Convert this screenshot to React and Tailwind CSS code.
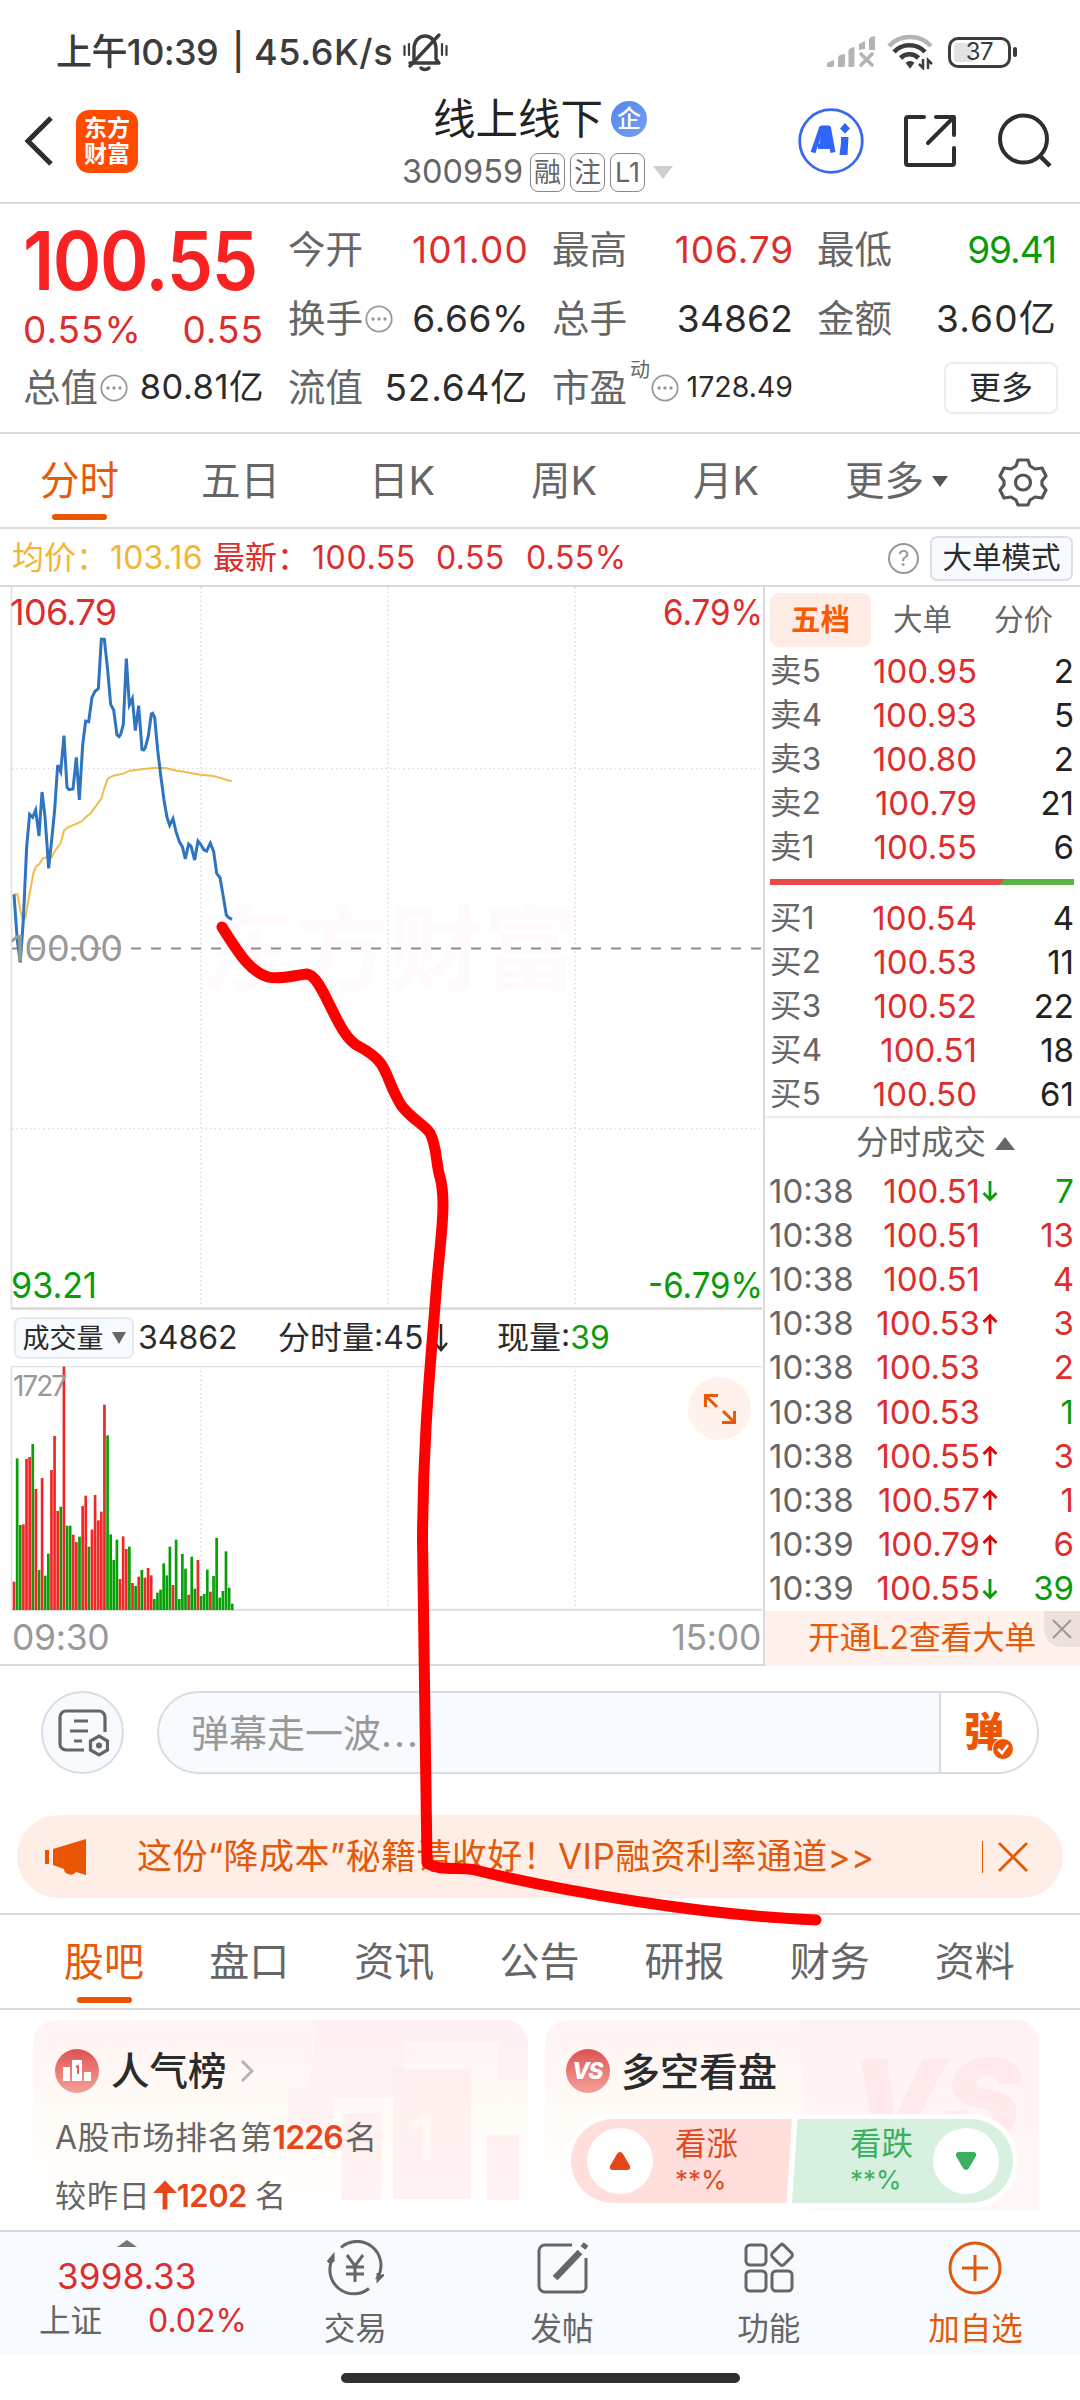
import React from "react";

const TICKS = [
  [1025, 1], [655, 0], [855, 0], [853, 1], [657, 1], [651, 1], [612, 0], [747, 1], [990, 0], [714, 1],
  [1007, 0], [941, 0], [690, 1], [588, 1], [813, 1], [800, 0], [380, 1], [857, 0], [857, 0], [884, 1],
  [906, 1], [890, 0], [798, 1], [767, 1], [920, 0], [869, 1], [765, 1], [841, 1], [815, 1], [494, 1],
  [586, 0], [883, 0], [960, 0], [899, 0], [1017, 1], [889, 1], [927, 1], [920, 0], [1029, 1], [1038, 0],
  [1010, 1], [990, 0], [1013, 1], [984, 1], [1006, 1], [1077, 0], [1058, 0], [1049, 0], [970, 0], [1006, 0],
  [920, 0], [1035, 1], [899, 0], [1077, 0], [942, 0], [986, 0], [1064, 1], [950, 0], [1046, 0], [960, 1],
  [1068, 0], [1062, 0], [989, 0], [1055, 1], [1008, 0], [894, 0], [1073, 0], [1053, 0], [934, 0], [1043, 0],
  [1091, 0],
];

const PRICE =
  "42,943 52,1082 61,1147 70,1020 80,800 89,703 98,712 107,690 117,768 126,636 135,710 146,865 155,780 164,690 173,555 182,575 192,467 201,622 207,629 219,627 229,532 238,660 248,495 257,423 266,425 276,352 285,334 295,326 304,178 313,178 323,270 332,373 341,390 351,465 357,470 362,463 370,433 379,236 388,375 397,356 406,452 416,377 426,508 431,510 436,503 445,468 454,402 458,400 464,412 473,510 482,585 492,660 501,712 509,736 519,716 528,755 538,785 547,800 556,837 566,792 573,798 584,840 594,783 602,793 612,810 620,813 631,789 641,815 650,880 660,893 669,945 679,1005 685,1012 696,1018";
const AVG =
  "42,943 52,943 61,990 68,1020 76,1015 88,945 100,880 108,860 118,852 128,836 138,832 155,832 165,812 182,790 192,752 205,741 225,733 247,723 258,711 272,700 285,682 304,656 313,625 323,597 335,589 350,585 370,581 390,572 430,567 470,563 500,565 530,572 560,577 600,584 640,588 665,595 680,600 696,603";

const ASKS = [["卖5", "100.95", "2"], ["卖4", "100.93", "5"], ["卖3", "100.80", "2"], ["卖2", "100.79", "21"], ["卖1", "100.55", "6"]];
const BIDS = [["买1", "100.54", "4"], ["买2", "100.53", "11"], ["买3", "100.52", "22"], ["买4", "100.51", "18"], ["买5", "100.50", "61"]];
const TRADES = [
  ["10:38", "100.51", "d", "7", 0], ["10:38", "100.51", "", "13", 1], ["10:38", "100.51", "", "4", 1],
  ["10:38", "100.53", "u", "3", 1], ["10:38", "100.53", "", "2", 1], ["10:38", "100.53", "", "1", 0],
  ["10:38", "100.55", "u", "3", 1], ["10:38", "100.57", "u", "1", 1], ["10:39", "100.79", "u", "6", 1],
  ["10:39", "100.55", "d", "39", 0],
];

const Dots = ({ className }) => (
  <svg className={className} width="28" height="28" viewBox="0 0 28 28">
    <circle cx="14" cy="14" r="12.7" fill="none" stroke="#999" strokeWidth="1.8" />
    <circle cx="8" cy="14" r="1.7" fill="#999" />
    <circle cx="14" cy="14" r="1.7" fill="#999" />
    <circle cx="20" cy="14" r="1.7" fill="#999" />
  </svg>
);

const Arrow = ({ dir }) => (
  <svg width="16" height="22" viewBox="0 0 16 22" fill="none" strokeWidth="2.8" stroke={dir === "u" ? "#e60000" : "#0a9b0a"}>
    {dir === "u" && <path d="M8 21V3M1.5 9 8 2.5 14.500 9" />}
    {dir === "d" && <path d="M8 1v18M1.500 13 8 19.500 14.500 13" />}
  </svg>
);

function StatusBar() {
  return (
    <div className="flex h-[84px] items-center pt-5 pl-[56px] text-[#3c3c3c]">
      <div className="flex w-[346px] items-center text-[36px] font-medium whitespace-nowrap">
        <span className="w-[176px] tracking-[-0.6px]">上午10:39</span>
        <span className="w-[22px]">|</span>
        <span className="tracking-[0.6px]">45.6K/s</span>
      </div>
      <svg width="46" height="40" viewBox="0 0 46 40" fill="none" stroke="#3c3c3c" strokeWidth="3.4" strokeLinecap="round">
        <path d="M8 31h29M12 31V17c0-8 5-13 11-13s11 5 11 13v10l3 4" strokeLinejoin="round" />
        <path d="M19 36c2 2 6 2 8 0M37 3 8 34" />
        <path d="M2.500 14v9M7 12v11M40 12v11M44.500 14v9" strokeWidth="2.2" />
      </svg>
      <svg className="ml-[378px]" width="50" height="34" viewBox="0 0 50 34" fill="#b5b3b6">
        <path d="M1 32v-3q0-2 2-2l5-2v5q0 2-2 2zM12 32V22l2-2 5-1v11q0 2-2 2zM22.500 32V15l2-2 4-1v18q0 2-2 2zM33 15V9l6-3v8zM43 15V4l2-2 4-1v14z" />
        <path d="m35 19 11 11M46 19 35 30" stroke="#b5b3b6" strokeWidth="3.6" strokeLinecap="round" />
      </svg>
      <svg className="ml-[11px]" width="46" height="36" viewBox="0 0 46 36" fill="none" strokeWidth="4.6">
        <path d="M2 12C13 0 33 0 44 12" stroke="#b5b3b6" />
        <path d="M7 18c8-9 23-9 31 0M13.500 24c5-5 13-5 18 0" stroke="#3c3c3c" />
        <path d="M20 29q3-2 6 0l-3 4z" fill="#3c3c3c" stroke="#3c3c3c" strokeWidth="2" />
        <path d="M36 25v9l-4-4M41 35v-9l4 4" stroke="#3c3c3c" strokeWidth="2.500" />
      </svg>
      <div className="ml-[15px] flex h-[31px] w-[63px] items-center justify-center rounded-[10px] border-[3px] border-[#3c3c3c] p-[3px]">
        <div className="flex h-full w-full items-center justify-center rounded-[4px] bg-linear-to-r from-[#e3e3e3] from-37% to-white to-37% text-[24px] leading-none tracking-[-0.500px]">37</div>
      </div>
      <div className="ml-[2px] h-[10px] w-[4px] rounded-[2px] bg-[#3c3c3c]" />
    </div>
  );
}

function Header() {
  const chip = "flex h-[39px] w-[35px] items-center justify-center rounded-[8px] border-[1.5px] border-[#888] text-[27px] leading-none text-[#666]";
  return (
    <div className="flex h-[120px] border-b-2 border-[#dadada]">
      <div className="flex w-[402px] items-center pb-1">
        <svg className="ml-[24px]" width="30" height="50" viewBox="0 0 30 50" fill="none" stroke="#2e2e2e" strokeWidth="5">
          <path d="M27 2 4 25l23 23" />
        </svg>
        <div className="ml-[22px] grid h-[63px] w-[62px] place-content-center rounded-[13px] bg-[#ff4a00] text-center text-[23px] leading-[26px] font-bold text-white">
          <div>东方</div>
          <div>财富</div>
        </div>
      </div>
      <div className="w-[366px] pt-[13px]">
        <div className="flex h-[44px] items-center pl-[31px]">
          <span className="text-[42.500px] leading-none whitespace-nowrap text-[#222]">线上线下</span>
          <div className="ml-[8px] grid size-[36px] place-content-center rounded-full bg-linear-to-br from-[#5486ea] to-[#74a0f4] text-[24px] leading-none font-medium text-white">企</div>
        </div>
        <div className="mt-[12px] flex h-[39px] items-center text-[#666]">
          <span className="w-[128px] text-[32.500px] leading-none">300959</span>
          <div className="flex gap-[5px]">
            <div className={chip}>融</div>
            <div className={chip}>注</div>
            <div className={chip}>L1</div>
          </div>
          <div className="ml-[8px] border-x-[10px] border-t-[13px] border-x-transparent border-t-[#cfcfcf]" />
        </div>
      </div>
      <div className="flex items-center pb-1 pl-[30px]">
        <svg width="66" height="66" viewBox="0 0 66 66" fill="#2f66f6">
          <circle cx="33" cy="33" r="31.300" strokeWidth="2.800" fill="none" stroke="#3a68ec" />
          <path d="M15 44.500 23.500 20h7L35 44.500M20 38.500h12" strokeWidth="5" stroke="#2f66f6" strokeLinejoin="round" fill="none" />
          <path d="M24 22h6l3 16H21zM43 29h7.500l-1 18H41.500l1.500-12z" />
          <path d="m47 15 5 5.500-5 5-5-5z" />
        </svg>
        <svg className="ml-[39px]" width="54" height="54" viewBox="0 0 54 54" fill="none" stroke="#2e2e2e" strokeWidth="4" strokeLinecap="round" strokeLinejoin="round">
          <path d="M21 3H5a2 2 0 0 0-2 2v44a2 2 0 0 0 2 2h44a2 2 0 0 0 2-2V34M33 3h18v18M50 4 25 29" />
        </svg>
        <svg className="ml-[40px]" width="56" height="56" viewBox="0 0 56 56" fill="none" stroke="#2e2e2e" strokeWidth="4">
          <circle cx="26.500" cy="26" r="23.500" />
          <path d="m42 42 11 11" strokeWidth="4.500" />
        </svg>
      </div>
    </div>
  );
}

function Quote() {
  const label = "text-[37.500px] text-[#666]";
  return (
    <div className="grid h-[230px] grid-cols-[265px_264px_265px_264px] grid-rows-[69px_69px_69px] border-b-2 border-[#dadada] pt-[11px] pl-[23px] leading-none whitespace-nowrap">
      <div className="flex h-[92px] origin-left scale-x-[0.91] items-center text-[81px] font-semibold tracking-[-1.500px] text-[#f92222]">100.55</div>
      <div className="flex w-[241px] items-center justify-between"><span className={label}>今开</span><span className="text-[37px] tracking-[1.200px] text-[#dd2d2d]">101.00</span></div>
      <div className="flex w-[242px] items-center justify-between"><span className={label}>最高</span><span className="text-[37px] tracking-[0.900px] text-[#dd2d2d]">106.79</span></div>
      <div className="flex w-[239px] items-center justify-between"><span className={label}>最低</span><span className="text-[37px] tracking-[-1px] text-[#0a9b0a]">99.41</span></div>

      <div className="flex w-[241px] items-center justify-between pt-[22px] text-[37px] tracking-[1px] text-[#dd2d2d]"><span>0.55%</span><span>0.55</span></div>
      <div className="flex w-[241px] items-center"><span className={label}>换手</span><Dots className="ml-[2px]" /><span className="ml-auto text-[37px] tracking-[0.600px] text-[#2b2b2b]">6.66%</span></div>
      <div className="flex w-[241px] items-center justify-between"><span className={label}>总手</span><span className="text-[37px] tracking-[0.200px] text-[#2b2b2b]">34862</span></div>
      <div className="flex w-[240px] items-center justify-between"><span className={label}>金额</span><span className="text-[37px] tracking-[1.200px] text-[#2b2b2b]">3.60亿</span></div>

      <div className="flex w-[241px] items-center"><span className={label}>总值</span><Dots className="ml-[2px]" /><span className="ml-auto text-[34.500px] tracking-[0.500px] text-[#2b2b2b]">80.81亿</span></div>
      <div className="flex w-[240px] items-center justify-between"><span className={label}>流值</span><span className="text-[37px] tracking-[0.800px] text-[#2b2b2b]">52.64亿</span></div>
      <div className="flex w-[241px] items-center"><span className={label}>市盈</span><span className="mb-[36px] ml-[3px] text-[20px] text-[#666]">动</span><Dots className="ml-px" /><span className="ml-auto text-[28.500px] text-[#2b2b2b]">1728.49</span></div>
      <div className="flex w-[241px] items-center justify-end"><div className="flex h-[52px] w-[114px] items-center justify-center rounded-[8px] border-2 border-[#ececec] text-[32px] text-[#2b2b2b]">更多</div></div>
    </div>
  );
}

function PeriodTabs() {
  return (
    <div className="flex h-[95px] items-center border-b-2 border-[#dadada] pt-[2px] text-[39.500px] leading-none whitespace-nowrap text-[#666]">
      <div className="relative ml-[40px] w-[161px] text-[#e65a0a]">
        分时
        <div className="absolute top-[52px] left-[12px] h-[6px] w-[55px] rounded-full bg-[#ea5504]" />
      </div>
      <span className="w-[168px]">五日</span>
      <span className="w-[162px]">日K</span>
      <span className="w-[162px]">周K</span>
      <span className="w-[152px]">月K</span>
      <span>更多</span>
      <div className="ml-[8px] border-x-[8px] border-t-[11px] border-x-transparent border-t-[#555]" />
      <svg className="ml-[50px]" width="50" height="50" viewBox="0 0 50 50" fill="none" stroke="#555" strokeWidth="3.200" strokeLinejoin="round">
        <path d="M20 3h10l2 6 5 3 7-1 4 8-4 5v4l4 5-4 8-7-1-5 3-2 5H20l-2-5-5-3-7 1-4-8 4-5v-4l-4-5 4-8 7 1 5-3z" />
        <circle cx="25" cy="25.500" r="7.500" />
      </svg>
    </div>
  );
}

function PriceLine() {
  return (
    <div className="flex h-[58px] items-center border-b-2 border-[#dadada] pt-[2px] pl-[12px] text-[32px] leading-none whitespace-nowrap text-[#dd2d2d]">
      <span className="w-[98px] text-[#f2b632]">均价：</span>
      <span className="w-[103px] tracking-[0.200px] text-[#f2b632]">103.16</span>
      <span className="w-[99px]">最新：</span>
      <span className="w-[124px] tracking-[0.600px]">100.55</span>
      <span className="w-[90px] tracking-[0.400px]">0.55</span>
      <span className="w-[362px] tracking-[0.400px]">0.55%</span>
      <div className="grid size-[31px] place-content-center rounded-full border-2 border-[#999] text-[22px] text-[#999]">?</div>
      <div className="ml-[11px] flex h-[45px] w-[143px] items-center justify-center rounded-[7px] border-2 border-[#dcdfe6] bg-[#f7faff] text-[29.500px] text-[#2b2b2b]">大单模式</div>
    </div>
  );
}

function PriceChart() {
  return (
    <svg className="block" width="763" height="723" viewBox="0 587 763 723" fontSize="36">
      <text x="201" y="984" fontSize="94" fontWeight="700" fill="#fefafe">东方财富</text>
      <g stroke="#dcdcdc" strokeWidth="1.500" strokeDasharray="1.500 3">
        <path d="M201 587V1308M388 587V1308M575 587V1308M12 768.500H762M12 1128.500H762" />
      </g>
      <path d="M11 948.500H762" stroke="#8c8c8c" strokeWidth="2.200" strokeDasharray="10 10" />
      <path d="M11.500 587V1308" stroke="#dfdfe2" strokeWidth="1.500" />
      <path d="M11 1308.500H762" stroke="#d8d8d8" strokeWidth="2.500" />
      <g transform="translate(0 580) scale(.33333)" fill="none">
        <polyline points={AVG} stroke="#f3bb47" strokeWidth="6" />
        <polyline points={PRICE} stroke="#2f74c0" strokeWidth="9" />
      </g>
      <text x="10" y="625" fill="#dd2d2d" textLength="107">106.79</text>
      <text x="663" y="625" fill="#dd2d2d" textLength="100" lengthAdjust="spacingAndGlyphs">6.79%</text>
      <text x="10" y="961" fill="#999" textLength="113">100.00</text>
      <text x="11" y="1298" fill="#0a9b0a" textLength="86" lengthAdjust="spacingAndGlyphs">93.21</text>
      <text x="648" y="1298" fill="#0a9b0a" textLength="115" lengthAdjust="spacingAndGlyphs">-6.79%</text>
    </svg>
  );
}

function VolumeHeader() {
  return (
    <div className="flex h-[56px] items-center pl-[14px] text-[32px] leading-none whitespace-nowrap text-[#2b2b2b]">
      <div className="flex h-[42px] w-[120px] items-center justify-center gap-[8px] rounded-[7px] border-2 border-[#e6e9ef] bg-[#f7faff] text-[27px]">
        成交量
        <div className="border-x-[7px] border-t-[12px] border-x-transparent border-t-[#666]" />
      </div>
      <span className="ml-[4px] w-[140px]">34862</span>
      <span className="w-[155px]">分时量:45</span>
      <svg width="16" height="30" viewBox="0 0 16 30" fill="none" stroke="#2b2b2b" strokeWidth="2.500">
        <path d="M8 1v26M2 20l6 7 6-7" />
      </svg>
      <span className="ml-[48px]">现量:<span className="text-[#0a9b0a]">39</span></span>
    </div>
  );
}

function VolumeChart() {
  return (
    <div className="relative">
      <svg className="block" width="763" height="245" viewBox="0 1366 763 245">
        <g stroke="#dcdcdc" strokeWidth="1.500" strokeDasharray="1.500 3">
          <path d="M201 1366V1610M388 1366V1610M575 1366V1610" />
        </g>
        <path d="M11 1366.500H762M11.500 1366V1610" stroke="#dfdfe2" strokeWidth="1.500" />
        <path d="M11 1610H762" stroke="#dfdfe2" strokeWidth="2.500" />
        {TICKS.map(([top, up], i) => (
          <rect key={i} x={12.7 + i * 3.117} y={1240 + top / 3} width="2.700" height={(1110 - top) / 3} fill={up ? "#f02828" : "#07a007"} />
        ))}
        <text x="13" y="1396" fontSize="28" fill="#999" textLength="54">1727</text>
      </svg>
      <div className="absolute top-[11px] left-[688px] grid size-[63px] place-content-center rounded-full bg-[#fff1ec]">
        <svg width="34" height="34" viewBox="0 0 34 34" fill="none" stroke="#e65a0a" strokeWidth="3">
          <path d="M2.500 15V3.500H15M3 4l11 11M31.500 19v11.500H19M31 30 20 19" />
        </svg>
      </div>
    </div>
  );
}

const BookRow = ({ row }) => (
  <div className="flex h-[44px] items-center text-[33px] leading-none">
    <span className="w-[80px] text-[31.500px] tracking-[0.200px] text-[#666]">{row[0]}</span>
    <span className="w-[127px] text-right text-[#dd2d2d]">{row[1]}</span>
    <span className="flex-1 text-right text-[#222]">{row[2]}</span>
  </div>
);

function OrderBook() {
  return (
    <div className="h-[1077px] w-[317px] border-l-2 border-[#dadada]">
      <div className="flex items-center pt-[6px] pl-[5px] text-[29.500px] leading-none text-[#666]">
        <div className="flex h-[54px] w-[101px] items-center justify-center rounded-[9px] bg-[#ffede5] font-bold text-[#fa5a05]">五档</div>
        <span className="ml-[22px]">大单</span>
        <span className="ml-[42px]">分价</span>
      </div>
      <div className="pt-[2px] pr-[6px] pl-[5px]">{ASKS.map((r) => <BookRow key={r[0]} row={r} />)}</div>
      <div className="mt-[10px] mr-[6px] ml-[5px] h-[6px] bg-linear-[135deg] from-[#e84a4a] from-76% to-[#5cb346] to-76%" />
      <div className="pt-[11px] pr-[6px] pl-[5px]">{BIDS.map((r) => <BookRow key={r[0]} row={r} />)}</div>
      <div className="flex h-[52px] items-center border-t-2 border-[#ececec] pl-[91px] text-[32.500px] leading-none text-[#666]">
        分时成交
        <div className="ml-[9px] border-x-[10px] border-b-[13px] border-x-transparent border-b-[#666]" />
      </div>
      <div className="pt-px pr-[6px] pl-[4px]">
        {TRADES.map((t, i) => (
          <div key={i} className="flex h-[44.200px] items-center text-[33px] leading-none">
            <span className="w-[92px] text-[#666]">{t[0]}</span>
            <span className="w-[119px] text-right text-[#dd2d2d]">{t[1]}</span>
            <div className="ml-[2px]"><Arrow dir={t[2]} /></div>
            <span className={t[4] ? "flex-1 text-right text-[#dd2d2d]" : "flex-1 text-right text-[#0a9b0a]"}>{t[3]}</span>
          </div>
        ))}
      </div>
      <div className="relative flex h-[55px] items-center bg-[#fff1ec] pl-[43px] text-[32px] leading-none tracking-[-0.200px] whitespace-nowrap text-[#e65a0a]">
        开通L2查看大单
        <div className="absolute top-0 right-0 grid h-[36px] w-[36px] place-content-center rounded-bl-[18px] bg-[#eee1dd]">
          <svg width="20" height="20" viewBox="0 0 20 20" stroke="#999" strokeWidth="2"><path d="m1 1 18 18M19 1 1 19" /></svg>
        </div>
      </div>
    </div>
  );
}

function Comment() {
  return (
    <div className="flex h-[133px] items-center pl-[41px]">
      <div className="grid size-[83px] place-content-center rounded-full border-2 border-[#d9dce2] bg-[#f7faff]">
        <svg width="52" height="48" viewBox="0 0 52 48" fill="none" stroke="#666" strokeWidth="3.200">
          <path d="M27 41H9a6 6 0 0 1-6-6V8a6 6 0 0 1 6-6h33a6 6 0 0 1 6 6v15M17 12h14M13 22h18M17 32h8" />
          <path d="m42 27 8.500 5v9L42 46l-8.500-5v-9z" />
          <circle cx="42" cy="36.500" r="3" fill="#666" stroke="none" />
        </svg>
      </div>
      <div className="ml-[33px] flex h-[83px] w-[882px] overflow-hidden rounded-full border-2 border-[#d9dce2] bg-[#f7faff]">
        <div className="flex flex-1 items-center pl-[32px] text-[38px] leading-none text-[#999]">弹幕走一波<span className="tracking-[2px]">...</span></div>
        <div className="relative w-[98px] border-l-2 border-[#d9dce2] bg-white">
          <span className="absolute top-[19px] left-[23px] text-[40px] leading-none font-black text-[#ea5504]">弹</span>
          <svg className="absolute top-[45px] left-[51px]" width="22" height="22" viewBox="0 0 22 22">
            <circle cx="11" cy="11" r="10.500" fill="#ea5504" stroke="#fff" />
            <path d="m6 11 4 4 6-8" fill="none" stroke="#fff" strokeWidth="2.500" />
          </svg>
        </div>
      </div>
    </div>
  );
}

function Promo() {
  return (
    <div className="mx-[17px] mt-[16px] flex h-[83px] items-center rounded-full bg-[#ffeee6] pl-[27px] text-[#e2590c]">
      <svg width="44" height="38" viewBox="0 0 44 38" fill="#ea5504">
        <path d="M1 12h4v14H1zM9 11 42 1v36l-10-3q-3 4-8 2-4-1-4-5L9 27z" />
      </svg>
      <span className="ml-[49px] w-[845px] text-[35px] leading-none tracking-[0.400px] whitespace-nowrap">这份“降成本”秘籍请收好！VIP融资利率通道&gt;&gt;</span>
      <div className="h-[32px] w-px bg-[#e2590c]" />
      <svg className="ml-[15px]" width="30" height="30" viewBox="0 0 30 30" stroke="#e2590c" strokeWidth="2.800"><path d="m1 1 28 28M29 1 1 29" /></svg>
    </div>
  );
}

function SectionTabs() {
  return (
    <div className="mt-[15px] flex h-[97px] items-center border-y-2 border-[#dadada] pl-[64px] text-[40px] leading-none whitespace-nowrap text-[#666]">
      {["股吧", "盘口", "资讯", "公告", "研报", "财务", "资料"].map((t, i) => (
        <div key={t} className={i ? "w-[145.300px]" : "relative w-[145.300px] text-[#e65a0a]"}>
          {t}
          {i === 0 && <div className="absolute top-[55px] left-[13px] h-[6px] w-[55px] rounded-full bg-[#ea5504]" />}
        </div>
      ))}
    </div>
  );
}

function Cards() {
  return (
    <div className="flex h-[220px] gap-[17px] pt-[10px] pl-[33px]">
      <div className="relative h-[190px] w-[495px] rounded-t-[24px] bg-linear-to-b from-[#fff4f4] via-[#fffbf6] via-50% to-white pl-[22px] whitespace-nowrap">
        <svg className="absolute top-0 right-0" width="255" height="190" viewBox="0 0 255 190">
          <path d="M45 0H231a24 24 0 0 1 24 24V60H225V22H132V78H60V120H15V68H35z" fill="#fff0f2" opacity=".7" />
          <path d="M120 49h78v130h-78zM70 93h38v87H68zM214 115h32v65h-32z" fill="#ffecec" opacity=".7" />
          <text x="136" y="140" fontSize="60" fontWeight="700" fill="#fff8f5">1</text>
        </svg>
        <div className="relative flex h-[102px] items-center">
          <div className="flex size-[44px] items-center justify-center rounded-full bg-linear-to-b from-[#dc5252] to-[#f4a09a]">
            <svg width="28" height="24" viewBox="0 0 28 24" fill="#fff"><path d="M0 8h7v14H0zM9 1h10v21H9zM21 13h7v9h-7z" /><path d="M13 8l2-1v8" stroke="#dc6060" strokeWidth="2" fill="none" /></svg>
          </div>
          <span className="ml-[12px] text-[38.500px] leading-none font-medium text-[#2b2b2b]">人气榜</span>
          <svg className="ml-[13px]" width="14" height="22" viewBox="0 0 14 22" fill="none" stroke="#b5b5b5" strokeWidth="3"><path d="m2 1 10 10L2 21" /></svg>
        </div>
        <div className="relative flex h-[32px] items-center text-[32px] leading-none text-[#666]"><span className="tracking-[0.500px]">A股市场排名第</span><b className="mr-[2px] font-semibold tracking-[-0.900px] text-[#e6461a]">1226</b>名</div>
        <div className="relative mt-[25px] flex h-[32px] items-center text-[31px] leading-none text-[#666]">
          <span className="tracking-[0.900px]">较昨日</span>
          <svg className="ml-[2px]" width="24" height="30" viewBox="0 0 25 30" fill="#e6461a"><path d="M12.500 0 25 13H15v17h-5V13H0z" /></svg>
          <b className="mr-[8px] font-semibold tracking-[-0.500px] text-[#e6461a]">1202</b>名
        </div>
      </div>
      <div className="relative h-[190px] w-[494px] rounded-t-[24px] bg-linear-to-b from-[#fff4f4] via-[#fffbf6] via-50% to-white">
        <svg className="absolute top-0 right-0" width="240" height="190" viewBox="0 0 240 190">
          <path d="M0 0H216a24 24 0 0 1 24 24V190H12z" fill="#fff0f2" opacity=".5" />
          <text x="50" y="120" fontSize="112" fontWeight="900" fontStyle="italic" fill="#ffe9ea" textLength="172" lengthAdjust="spacingAndGlyphs">VS</text>
        </svg>
        <div className="relative flex h-[102px] items-center pl-[21px]">
          <div className="grid size-[44px] place-content-center rounded-full bg-linear-to-b from-[#dc5252] to-[#f4a09a] pr-0.5 text-[23px] leading-none font-extrabold tracking-[-1.500px] text-white italic">VS</div>
          <span className="ml-[11px] text-[39px] leading-none font-medium text-[#2b2b2b]">多空看盘</span>
        </div>
        <div className="relative -mt-[8px] ml-[21px] flex h-[94px] w-[452px] overflow-hidden rounded-full border-[5px] border-white bg-white text-[31.500px] leading-none">
          <div className="flex flex-1 items-center bg-[#ffdedb] pl-[16px] text-[#e04a1e] [clip-path:polygon(0_0,100%_0,97.500%_100%,0_100%)]">
            <div className="grid size-[66px] place-content-center rounded-full bg-white"><svg width="22" height="18" viewBox="0 0 22 18" fill="#e6461a"><path d="M11 0q2 0 3 2l7 12q1 4-3 4H4q-4 0-3-4L8 2q1-2 3-2z" /></svg></div>
            <div className="ml-[22px] -mt-[2px]">看涨<div className="mt-[9px] text-[26px] leading-[24px]">**%</div></div>
          </div>
          <div className="flex w-[221px] items-center justify-end bg-[#d8f0df] pr-[14px] text-[#3bb063] [clip-path:polygon(2.500%_0,100%_0,100%_100%,0_100%)]">
            <div className="-mt-[2px] mr-[20px]">看跌<div className="mt-[9px] text-[26px] leading-[24px]">**%</div></div>
            <div className="grid size-[66px] place-content-center rounded-full bg-white"><svg className="rotate-180" width="22" height="18" viewBox="0 0 22 18" fill="#3bb063"><path d="M11 0q2 0 3 2l7 12q1 4-3 4H4q-4 0-3-4L8 2q1-2 3-2z" /></svg></div>
          </div>
        </div>
      </div>
    </div>
  );
}

const NAV_ICONS = [
  <g key="a"><path d="M15 7.500A24 24 0 0 1 52 37l4-1-4 4v-7M43 48.500A24 24 0 0 1 6 20l-4 2 5-6v6M21 15l8 11 8-11M20 27h18M20 34h18M29 26v16" /></g>,
  <g key="b"><path d="M39 5H12a6 6 0 0 0-6 6v35a6 6 0 0 0 6 6h36a5 5 0 0 0 5-5V18" /><path d="M47 12 26 34l-4 4" strokeWidth="6.500" /><path d="m50 8 3-4" strokeWidth="6" /></g>,
  <g key="c"><rect x="6" y="5" width="20" height="20" rx="4" /><rect x="6" y="31" width="20" height="20" rx="4" /><rect x="32" y="31" width="20" height="20" rx="4" /><path d="m40 5.500 2-1.500 2 1.500 8 8q1 1.500 0 3l-8 8-2 1-2-1-8-8q-1-1.500 0-3z" /></g>,
  <g key="d"><circle cx="29" cy="28" r="25" /><path d="M29 15v26M16 28h26" /></g>,
];

function BottomNav() {
  return (
    <div className="flex h-[125px] border-t-2 border-[#d3d9e2] bg-[#f7faff] leading-none whitespace-nowrap">
      <div className="w-[252px]">
        <div className="ml-[117px] w-0 border-x-[10px] border-b-[7px] border-x-transparent border-b-[#777] pt-[8px]" />
        <div className="mt-[12px] ml-[57px] text-[35px] tracking-[0.200px] text-[#dd2d2d]">3998.33</div>
        <div className="mt-[10px] flex h-[34px] items-center"><span className="ml-[39px] w-[109px] text-[31.500px] text-[#666]">上证</span><span className="text-[32px] text-[#dd2d2d]">0.02%</span></div>
      </div>
      {["交易", "发帖", "功能", "加自选"].map((t, i) => (
        <div key={t} className={i === 3 ? "flex w-[206.700px] flex-col items-center pt-[8px] text-[#e2590c]" : "flex w-[206.700px] flex-col items-center pt-[8px] text-[#666]"}>
          <svg width="58" height="56" viewBox="0 0 58 56" fill="none" stroke="currentColor" strokeWidth="3">{NAV_ICONS[i]}</svg>
          <span className="mt-[17px] text-[31.500px]">{t}</span>
        </div>
      ))}
    </div>
  );
}

export default function App() {
  return (
    <div className="relative h-[2400px] w-[1080px] overflow-hidden bg-white font-['Inter','Noto_Sans_CJK_SC',sans-serif]">
      <StatusBar />
      <Header />
      <Quote />
      <PeriodTabs />
      <PriceLine />
      <div className="flex h-[1079px] border-b-2 border-[#dadada]">
        <div className="w-[763px]">
          <PriceChart />
          <VolumeHeader />
          <VolumeChart />
          <div className="flex h-[53px] items-center justify-between pr-[2px] pl-[12px] text-[35.500px] leading-none tracking-[-0.300px] text-[#999]">
            <span>09:30</span>
            <span>15:00</span>
          </div>
        </div>
        <OrderBook />
      </div>
      <Comment />
      <Promo />
      <SectionTabs />
      <Cards />
      <BottomNav />
      <div className="mx-auto mt-[18px] h-[10px] w-[399px] rounded-full bg-[#303030]" />
      <svg className="pointer-events-none absolute top-0 left-0" width="1080" height="2400" viewBox="0 0 1080 2400" fill="none" stroke="#f00" strokeWidth="11" strokeLinecap="round" strokeLinejoin="round">
        <path d="M222 927C238 952 249 971 268 977C281 980 295 975 307 974C324 976 336 1037 360 1047C390 1063 383 1075 401 1105C411 1119 424 1124 430 1133C437 1146 436 1165 440 1177C447 1203 440 1240 436 1293C430 1370 423 1440 422.500 1540L427 1863C440 1872 460 1866 475 1870C560 1891 700 1915 816 1920" />
      </svg>
    </div>
  );
}
